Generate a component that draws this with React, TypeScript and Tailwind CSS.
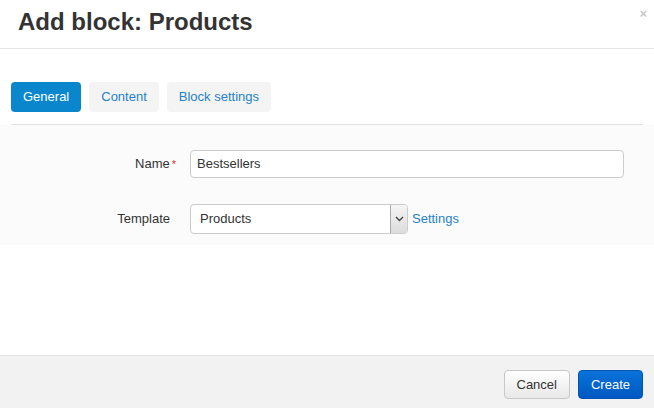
export default function App() {
  return (
    <div className="w-[654px] h-[408px] bg-white flex flex-col font-['Liberation_Sans',Arial,sans-serif] text-[#333]">
      {/* header */}
      <div className="h-[49px] border-b border-[#e5e5e5] flex items-start justify-between pl-[18px] pr-[7px]">
        <h1 className="text-[24px] font-bold leading-none pt-[10px] text-[#333]">Add block: Products</h1>
        <span className="text-[#c8c8c8] text-[13px] font-bold leading-none pt-[7px]">×</span>
      </div>

      {/* tabs */}
      <div className="px-[11px] pt-[33px]">
        <div className="flex gap-[8px] pb-[12px] border-b border-[#e0e0e0]">
          <div className="h-[30px] px-[12px] rounded-[4px] bg-[#0a87cc] text-white text-[13px] flex items-center">General</div>
          <div className="h-[30px] px-[12px] rounded-[4px] bg-[#f4f4f4] text-[#1f82c9] text-[13px] flex items-center">Content</div>
          <div className="h-[30px] px-[12px] rounded-[4px] bg-[#f4f4f4] text-[#1f82c9] text-[13px] flex items-center">Block settings</div>
        </div>
      </div>

      {/* form */}
      <div className="bg-[#fbfbfb] pt-[25px] pb-[11px] flex flex-col gap-[26px] text-[13px]">
        <div className="flex items-center">
          <div className="w-[190px] pr-[14px] flex justify-end items-center">
            <span>Name</span>
            <span className="text-[#e0332e] text-[11px] ml-[2px] leading-none">*</span>
          </div>
          <div className="w-[434px] h-[28px] border border-[#ccc] rounded-[4px] bg-white px-[6px] flex items-center">Bestsellers</div>
        </div>
        <div className="flex items-center">
          <div className="w-[190px] pr-[20px] flex justify-end">Template</div>
          <div className="w-[218px] h-[30px] border border-[#ccc] rounded-[4px] bg-white flex items-center">
            <span className="flex-1 pl-[9px]">Products</span>
            <div className="w-[17px] h-full border-l border-[#aaa] bg-gradient-to-b from-[#f5f5f5] to-[#dcdcdc] rounded-r-[3px] flex items-center justify-center">
              <svg width="9" height="6" viewBox="0 0 9 6" fill="none" stroke="#444" strokeWidth="1.4">
                <path d="M1 1l3.5 3.5L8 1" />
              </svg>
            </div>
          </div>
          <span className="ml-[4px] text-[#1f82c9]">Settings</span>
        </div>
      </div>

      <div className="flex-1" />

      {/* footer */}
      <div className="h-[53px] border-t border-[#e2e2e2] bg-[#f2f2f2] flex items-center justify-end gap-[8px] pr-[11px] pt-[5px] text-[13px]">
        <div className="h-[29px] px-[12px] rounded-[4px] border border-[#c8c8c8] bg-gradient-to-b from-white to-[#e8e8e8] flex items-center text-[#333]">Cancel</div>
        <div className="h-[29px] px-[12px] rounded-[4px] border border-[#0055b3] bg-gradient-to-b from-[#0a73d9] to-[#0058c2] flex items-center text-white">Create</div>
      </div>
    </div>
  );
}
